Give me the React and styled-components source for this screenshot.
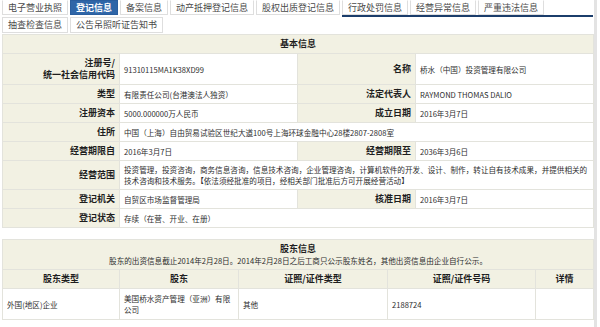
import React from "react";
import styled, { createGlobalStyle } from "styled-components";

const Global = createGlobalStyle`
  html, body { margin: 0; padding: 0; background: #fff; }
  body { font-family: "Noto Sans CJK SC", "Noto Sans", sans-serif; color: #333; }
`;

const Page = styled.div`
  box-sizing: border-box;
  width: 597px;
  min-height: 100vh;
  padding: 0 1px 0 2px;
  border-right: 3px solid #e3e3e3;
`;

const TabBar = styled.div`
  display: flex;
  flex-direction: column;
  margin-bottom: 1px;
`;

const TabRow = styled.div`
  display: flex;
  gap: 2px;
  height: ${(p) => p.$h}px;
`;

const TabGroup = styled.div`
  display: flex;
  gap: 2px;
  flex: 1;
  height: 15px;
  border-bottom: 2px solid #1b3d6b;
`;

const Tab = styled.div`
  box-sizing: border-box;
  height: ${(p) => p.$h || 15}px;
  padding: 0 5px;
  border: 1px solid ${(p) => (p.$active ? "#2a5e9e" : "#dedede")};
  border-top-color: ${(p) => (p.$active ? "#2a5e9e" : p.$top ? "#dedede" : "transparent")};
  background: ${(p) => (p.$active ? "#2f66a8" : "#fff")};
  color: ${(p) => (p.$active ? "#fff" : "#4a4a4a")};
  font-size: 9px;
  line-height: ${(p) => (p.$h || 15) - 2}px;
  white-space: nowrap;
  font-weight: ${(p) => (p.$active ? 700 : 400)};
`;

const Table = styled.table`
  width: 591px;
  border-collapse: collapse;
  table-layout: fixed;
  margin-top: ${(p) => p.$mt || 0}px;
  border: 1px solid #e0dfd4;
`;

const Cell = styled.td`
  border: 1px solid #e3e3dc;
  padding: 3px 4px;
  vertical-align: middle;
  font-size: 7.6px;
  line-height: 11px;
  color: #2e2e2e;
  background: #fff;
  word-break: break-all;
`;

const Label = styled.th`
  border: 1px solid #e3e3dc;
  padding: 3px 4px;
  background: #f2f1e3;
  text-align: right;
  font-size: 9px;
  line-height: 12px;
  font-weight: 700;
  color: #1e1e1e;
`;

const HeadCell = styled.th`
  border: 1px solid #e3e3dc;
  padding: 3px 4px;
  background: #f2f1e3;
  text-align: center;
  font-size: 9px;
  line-height: 12px;
  font-weight: 700;
  color: #1e1e1e;
`;

const Sub = styled.div`
  font-size: 7.6px;
  line-height: 11px;
  font-weight: 400;
  color: #2e2e2e;
`;

const DataRow = styled.tr`
  & > td {
    padding-top: 4px;
    padding-bottom: 4px;
  }
`;

const Col = styled.col``;

const row1 = ["电子营业执照", "登记信息", "备案信息", "动产抵押登记信息", "股权出质登记信息"];
const row1b = ["行政处罚信息", "经营异常信息", "严重违法信息"];
const row2 = ["抽查检查信息", "公告吊照听证告知书"];

export default function App() {
  return (
    <>
      <Global />
      <Page>
        <TabBar>
          <TabRow $h={17}>
            {row1.map((t) => (
              <Tab key={t} $active={t === "登记信息"}>{t}</Tab>
            ))}
            <TabGroup>
              {row1b.map((t) => (
                <Tab key={t}>{t}</Tab>
              ))}
            </TabGroup>
          </TabRow>
          <TabRow $h={16}>
            {row2.map((t) => (
              <Tab key={t} $h={16} $top>{t}</Tab>
            ))}
          </TabRow>
        </TabBar>

        <Table>
          <colgroup>
            <Col style={{ width: 117 }} />
            <Col style={{ width: 178 }} />
            <Col style={{ width: 118 }} />
            <Col style={{ width: 178 }} />
          </colgroup>
          <tbody>
            <tr>
              <HeadCell colSpan={4}>基本信息</HeadCell>
            </tr>
            <tr>
              <Label>注册号/<br />统一社会信用代码</Label>
              <Cell>91310115MA1K38XD99</Cell>
              <Label>名称</Label>
              <Cell>桥水（中国）投资管理有限公司</Cell>
            </tr>
            <tr>
              <Label>类型</Label>
              <Cell>有限责任公司(台港澳法人独资）</Cell>
              <Label>法定代表人</Label>
              <Cell>RAYMOND THOMAS DALIO</Cell>
            </tr>
            <tr>
              <Label>注册资本</Label>
              <Cell>5000.000000万人民币</Cell>
              <Label>成立日期</Label>
              <Cell>2016年3月7日</Cell>
            </tr>
            <tr>
              <Label>住所</Label>
              <Cell colSpan={3}>中国（上海）自由贸易试验区世纪大道100号上海环球金融中心28楼2807-2808室</Cell>
            </tr>
            <tr>
              <Label>经营期限自</Label>
              <Cell>2016年3月7日</Cell>
              <Label>经营期限至</Label>
              <Cell>2036年3月6日</Cell>
            </tr>
            <tr>
              <Label>经营范围</Label>
              <Cell colSpan={3}>
                投资管理，投资咨询，商务信息咨询，信息技术咨询，企业管理咨询，计算机软件的开发、设计、制作，转让自有技术成果，并提供相关的技术咨询和技术服务。【依法须经批准的项目，经相关部门批准后方可开展经营活动】
              </Cell>
            </tr>
            <tr>
              <Label>登记机关</Label>
              <Cell>自贸区市场监督管理局</Cell>
              <Label>核准日期</Label>
              <Cell>2016年3月7日</Cell>
            </tr>
            <tr>
              <Label>登记状态</Label>
              <Cell colSpan={3}>存续（在营、开业、在册）</Cell>
            </tr>
          </tbody>
        </Table>

        <Table $mt={11}>
          <colgroup>
            <Col style={{ width: 117 }} />
            <Col style={{ width: 119 }} />
            <Col style={{ width: 149 }} />
            <Col style={{ width: 148 }} />
            <Col style={{ width: 58 }} />
          </colgroup>
          <tbody>
            <tr>
              <HeadCell colSpan={5}>
                股东信息
                <Sub>股东的出资信息截止2014年2月28日。2014年2月28日之后工商只公示股东姓名，其他出资信息由企业自行公示。</Sub>
              </HeadCell>
            </tr>
            <tr>
              <HeadCell>股东类型</HeadCell>
              <HeadCell>股东</HeadCell>
              <HeadCell>证照/证件类型</HeadCell>
              <HeadCell>证照/证件号码</HeadCell>
              <HeadCell>详情</HeadCell>
            </tr>
            <DataRow>
              <Cell>外国(地区)企业</Cell>
              <Cell>美国桥水资产管理（亚洲）有限公司</Cell>
              <Cell>其他</Cell>
              <Cell>2188724</Cell>
              <Cell></Cell>
            </DataRow>
          </tbody>
        </Table>
      </Page>
    </>
  );
}
